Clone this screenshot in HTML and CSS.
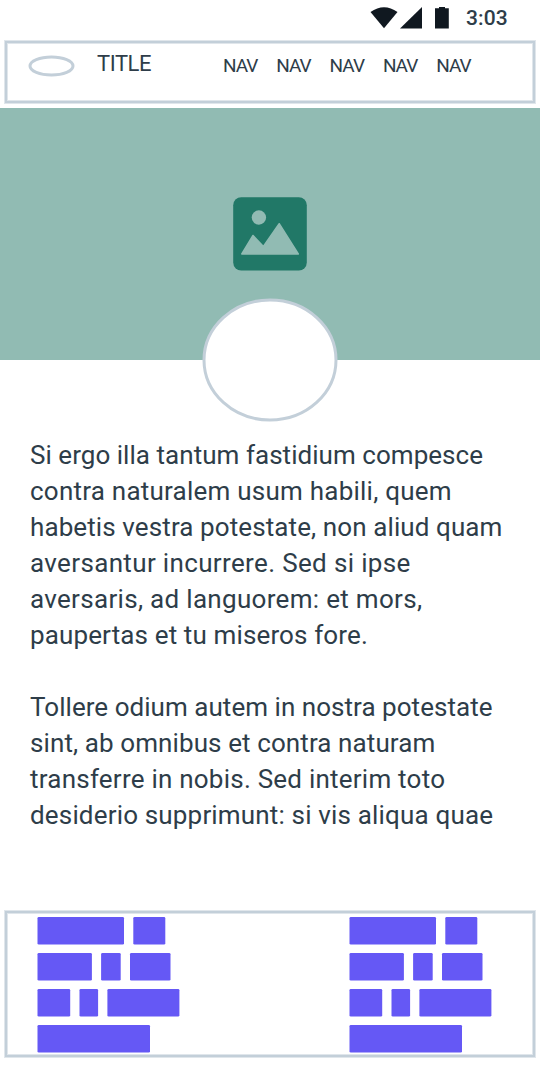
FILE: index.html
```html
<!DOCTYPE html>
<html lang="la">
<head>
<meta charset="utf-8">
<title>Title</title>
<link rel="stylesheet" href="styles.css">
</head>
<body>
<div class="status">
<svg class="status-icons" width="90" height="36" viewBox="0 0 90 36"><path d="M0.5 12Q14 2.5 27.5 12L14 28.3Z"/><path d="M30 28.6L52 7V28.6Z"/><path d="M65 8.3h4V7h6v1.3h3.8v20.3H65Z"/></svg>
<span class="time">3:03</span>
</div>
<header class="header panel">
<svg class="logo" width="48" height="24" viewBox="0 0 48 24"><ellipse cx="24.5" cy="12" rx="21.5" ry="9"/></svg>
<h1 class="title">TITLE</h1>
<nav class="nav"><a>NAV</a><a>NAV</a><a>NAV</a><a>NAV</a><a>NAV</a></nav>
</header>
<section class="hero">
<svg class="picture" width="74" height="74" viewBox="0 0 74 74"><rect class="frame" x=".2" y=".2" width="73.6" height="73.4" rx="8"/><circle cx="25.9" cy="20.5" r="7.2"/><path d="M8.8 57L20 38.5L30.4 49.5L46.2 26.7L65.3 57Z"/></svg>
<svg class="avatar" width="138" height="126" viewBox="0 0 138 126"><ellipse cx="69" cy="63" rx="66" ry="60"/></svg>
</section>
<main class="copy">
<p><span class="line s1">Si ergo illa tantum fastidium compesce</span> <span class="line s5">contra naturalem usum habili, quem</span> <span class="line s2">habetis vestra potestate, non aliud quam</span> <span class="line s7">aversantur incurrere. Sed si ipse</span> <span class="line s6">aversaris, ad languorem: et mors,</span> <span class="line s3">paupertas et tu miseros fore.</span></p>
<p><span class="line s1">Tollere odium autem in nostra potestate</span> <span class="line s2">sint, ab omnibus et contra naturam</span> <span class="line s5">transferre in nobis. Sed interim toto</span> <span class="line s4">desiderio supprimunt: si vis aliqua quae</span></p>
</main>
<footer class="footer panel">
<svg class="bricks" width="143" height="136" viewBox="-.5 0 143 136"><rect width="86.5" height="27.6" rx="1.3"/><rect x="95.8" width="32" height="27.6" rx="1.3"/><rect y="36" width="54.4" height="27.6" rx="1.3"/><rect x="63.6" y="36" width="19.6" height="27.6" rx="1.3"/><rect x="92.5" y="36" width="40.5" height="27.6" rx="1.3"/><rect y="72" width="32.7" height="27.6" rx="1.3"/><rect x="42" y="72" width="18.6" height="27.6" rx="1.3"/><rect x="69.9" y="72" width="72" height="27.6" rx="1.3"/><rect y="108" width="112.5" height="27.6" rx="1.3"/></svg>
<svg class="bricks" width="143" height="136" viewBox="-.5 0 143 136"><rect width="86.5" height="27.6" rx="1.3"/><rect x="95.8" width="32" height="27.6" rx="1.3"/><rect y="36" width="54.4" height="27.6" rx="1.3"/><rect x="63.6" y="36" width="19.6" height="27.6" rx="1.3"/><rect x="92.5" y="36" width="40.5" height="27.6" rx="1.3"/><rect y="72" width="32.7" height="27.6" rx="1.3"/><rect x="42" y="72" width="18.6" height="27.6" rx="1.3"/><rect x="69.9" y="72" width="72" height="27.6" rx="1.3"/><rect y="108" width="112.5" height="27.6" rx="1.3"/></svg>
</footer>
</body>
</html>
```
FILE: styles.css
```css
body {
  margin: 0;
  width: 540px;
  height: 1080px;
  background: #fff;
  color: #2e3d49;
  font-family: Roboto, sans-serif;
  display: flex;
  flex-direction: column;
}
svg { display: block; flex: none; }
.status { height: 36px; display: flex; padding-left: 370px; }
.status-icons { fill: #101820; }
.time { font-size: 21px; font-weight: 500; line-height: 36px; margin-left: 6px; letter-spacing: .15px; }
.panel {
  box-sizing: border-box;
  margin: 5px;
  border: 2px solid #c3cfd9;
  box-shadow: 0 0 0 1px #e0e6eb, inset 0 0 0 1px #e0e6eb;
  display: flex;
}
.header { height: 62px; padding: 11px 0 0 20px; }
.logo ellipse, .avatar ellipse { fill: #fff; stroke: #c3cfd9; stroke-width: 3; }
.title { width: 126px; font-size: 22px; line-height: 20px; font-weight: 400; letter-spacing: -.45px; margin: 0 0 0 22px; }
.nav { display: flex; font-size: 19px; line-height: 24px; letter-spacing: -1px; }
.nav a { width: 53.3px; }
.hero { height: 252px; background: #91bbb3; display: flex; flex-direction: column; align-items: center; }
.picture { margin-top: 89px; fill: #91bbb3; }
.picture path { stroke: #91bbb3; stroke-width: 1.5; stroke-linejoin: round; }
.frame { fill: #217867; }
.avatar { margin-top: 26px; }
.copy { flex: 1; font-size: 26px; line-height: 36px; padding: 77px 0 0 30px; }
.copy p { margin: 0 0 36px; }
.line { display: block; white-space: nowrap; }
.s1 { letter-spacing: .04px; }
.s2 { letter-spacing: .1px; }
.s3 { letter-spacing: .13px; }
.s4 { letter-spacing: .17px; }
.s5 { letter-spacing: .23px; }
.s6 { letter-spacing: .31px; }
.s7 { letter-spacing: .35px; }
.footer { height: 146px; margin-bottom: 23px; padding: 4px 0 0 30px; gap: 169px; }
.bricks { fill: #6558f5; }
```
